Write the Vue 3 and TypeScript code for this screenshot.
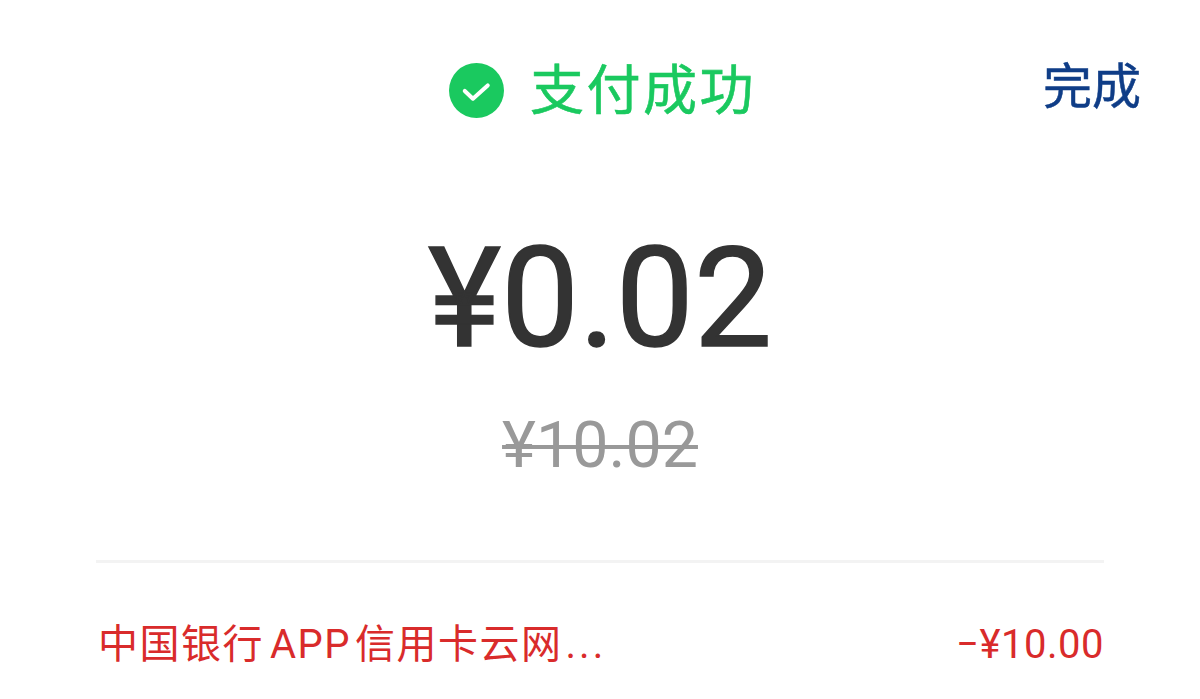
<script setup lang="ts">
const title = '支付成功'
</script>

<template>
  <div class="page">
    <header class="top">
      <div class="status">
        <svg class="check" viewBox="0 0 54 54">
          <circle cx="27" cy="27" r="27" fill="#1ac95f" />
          <path d="M15.5 27.5l8 7.5 14.5-13" fill="none" stroke="#fff" stroke-width="4" stroke-linecap="round" stroke-linejoin="round" />
        </svg>
        <span class="title">{{ title }}</span>
      </div>
      <a class="done">完成</a>
    </header>
    <div class="amount">¥0.02</div>
    <div class="original">¥10.02</div>
    <div class="line"></div>
    <div class="row">
      <span class="name">中国银行<span class="latin">APP</span>信用卡云网<span class="dots">...</span></span>
      <span class="num">−¥10.00</span>
    </div>
  </div>
</template>

<style scoped>
.page {
  width: 1200px;
  height: 699px;
  overflow: hidden;
  background: #fff;
  font-family: Roboto, "Noto Sans CJK SC", sans-serif;
}
.top {
  position: relative;
  display: flex;
  justify-content: center;
  padding-top: 56px;
  height: 68px;
}
.status {
  display: flex;
  align-items: center;
  gap: 26px;
  height: 68px;
  margin-left: 5px;
}
.check {
  width: 55px;
  height: 55px;
}
.title {
  margin-top: 4px;
  font-size: 54px;
  line-height: 68px;
  color: #1ac95f;
  letter-spacing: 2.5px;
  -webkit-text-stroke: 0.6px #1ac95f;
}
.done {
  position: absolute;
  right: 59px;
  top: 54px;
  font-size: 49px;
  line-height: 68px;
  color: #0f3d87;
  -webkit-text-stroke: 0.5px #0f3d87;
}
.amount {
  margin-top: 95px;
  text-align: center;
  font-size: 139px;
  line-height: 160px;
  color: #333;
  -webkit-text-stroke: 1.5px #333;
}
.original {
  margin-top: 31px;
  text-align: center;
  font-size: 64.5px;
  line-height: 70px;
  color: #999;
  text-decoration: line-through;
  text-decoration-thickness: 4px;
}
.line {
  margin: 80px 96px 0;
  height: 3px;
  background: #f3f3f3;
}
.row {
  display: flex;
  justify-content: space-between;
  margin: 52px 96px 0 98px;
  font-size: 40px;
  line-height: 60px;
  color: #d92b2b;
}
.name {
  letter-spacing: 1.5px;
}
.latin {
  margin: 0 4px 0 6px;
}
.dots {
  letter-spacing: 3px;
  margin-left: 3px;
}
.num {
  letter-spacing: 0.5px;
}
</style>
